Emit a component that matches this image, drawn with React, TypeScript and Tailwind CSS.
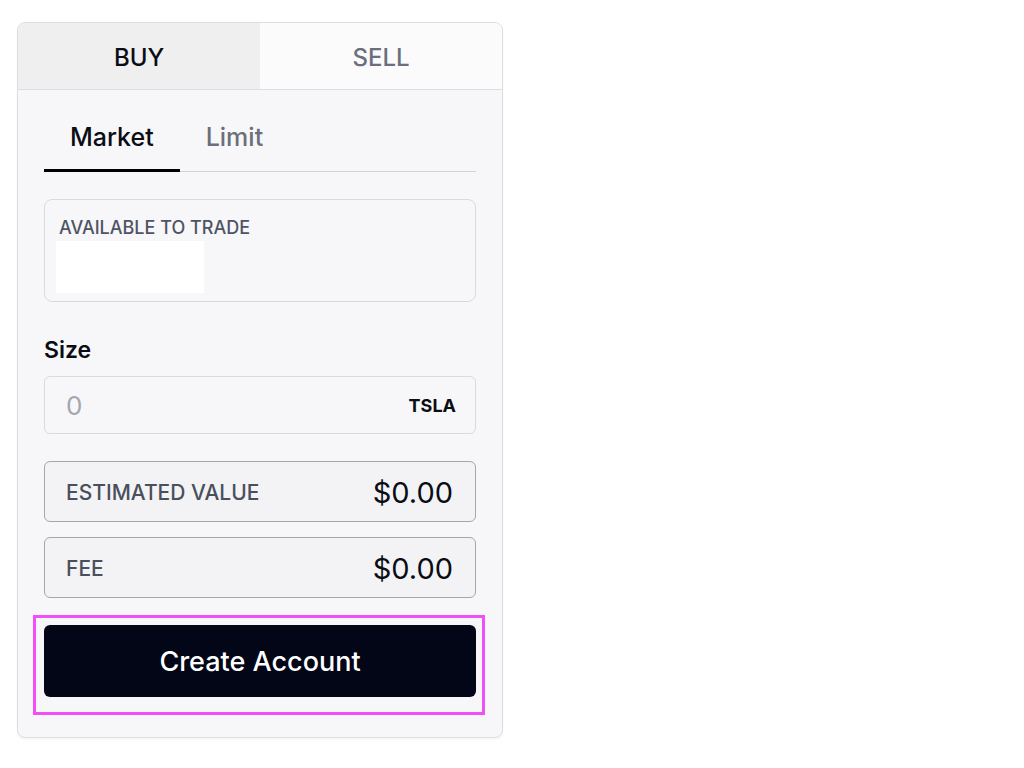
import React, { useState } from 'react';

type Side = 'buy' | 'sell';
type OrderType = 'market' | 'limit';

const font = { fontFamily: 'Inter, Lato, sans-serif' };

const SummaryRow: React.FC<{ label: string; value: string }> = ({ label, value }) => (
  <div className="flex h-[61px] items-center justify-between rounded-md border border-[#a3a6ae] bg-[#f3f3f5] pl-[21px] pr-[22px] pt-[2px]">
    <span className="text-[21px] font-medium text-[#4a4f5c]">{label}</span>
    <span className="text-[29px] text-[#0b0d14]">{value}</span>
  </div>
);

export default function App() {
  const [side, setSide] = useState<Side>('buy');
  const [orderType, setOrderType] = useState<OrderType>('market');
  const [size, setSize] = useState('');

  return (
    <div className="min-h-screen bg-white pl-[17px] pt-[22px]" style={font}>
      <div className="w-[486px] overflow-hidden rounded-lg border border-[#dedee2] bg-[#f7f7f9] shadow-[0_2px_3px_rgba(0,0,0,0.04)]">
        {/* buy / sell */}
        <div className="grid h-[67px] grid-cols-2 border-b border-[#dedee2]">
          <button
            onClick={() => setSide('buy')}
            className={`pt-[3px] text-[24px] font-medium ${side === 'buy' ? 'bg-[#efeff0] text-[#0b0d14]' : 'bg-[#fbfbfc] text-[#6b6f7b]'}`}
          >
            BUY
          </button>
          <button
            onClick={() => setSide('sell')}
            className={`pt-[3px] text-[24px] font-medium ${side === 'sell' ? 'bg-[#efeff0] text-[#0b0d14]' : 'bg-[#fbfbfc] text-[#6b6f7b]'}`}
          >
            SELL
          </button>
        </div>

        <div className="px-[26px] pb-[40px]">
          {/* market / limit */}
          <div className="mt-[20px] flex border-b border-[#d4d4d8]">
            {(['market', 'limit'] as OrderType[]).map(tab => (
              <button
                key={tab}
                onClick={() => setOrderType(tab)}
                className={`-mb-px h-[62px] border-b-[3px] px-[26px] pb-[4px] text-[25px] font-medium capitalize ${
                  orderType === tab ? 'border-black text-[#0b0d14]' : 'border-transparent text-[#6b6f7b]'
                }`}
              >
                {tab}
              </button>
            ))}
          </div>

          {/* available */}
          <div className="mt-[27px] flex h-[103px] flex-col rounded-lg border border-[#d9d9de] pl-[11px] pt-[18px]">
            <span className="pl-[3px] text-[18px] font-medium leading-[20px] text-[#4f5462]">AVAILABLE TO TRADE</span>
            <div className="mt-[3px] h-[52px] w-[148px] bg-white" />
          </div>

          {/* size */}
          <div className="mt-[34px] text-[23px] font-semibold leading-[28px] text-[#0b0d14]">Size</div>
          <div className="mt-[12px] flex h-[58px] items-center rounded-md border border-[#d9d9de] bg-[#f7f7f9] pl-[21px] pr-[19px]">
            <input
              value={size}
              onChange={e => setSize(e.target.value)}
              placeholder="0"
              className="min-w-0 flex-1 bg-transparent text-[26px] text-[#0b0d14] outline-none placeholder:text-[#a3a6ae]"
            />
            <span className="text-[18px] font-bold text-[#0b0d14]">TSLA</span>
          </div>

          {/* summary */}
          <div className="mt-[27px] flex flex-col gap-[15px]">
            <SummaryRow label="ESTIMATED VALUE" value="$0.00" />
            <SummaryRow label="FEE" value="$0.00" />
          </div>

          <div className="relative mt-[27px]">
            <button className="flex h-[72px] w-full items-center justify-center rounded-md bg-[#020617] pt-[3px] text-[27px] font-medium text-white">
              Create Account
            </button>
            <span className="pointer-events-none absolute -bottom-[18px] -left-[11px] -right-[9px] -top-[10px] border-[3px] border-[#f050f5]" />
          </div>
        </div>
      </div>
    </div>
  );
}
